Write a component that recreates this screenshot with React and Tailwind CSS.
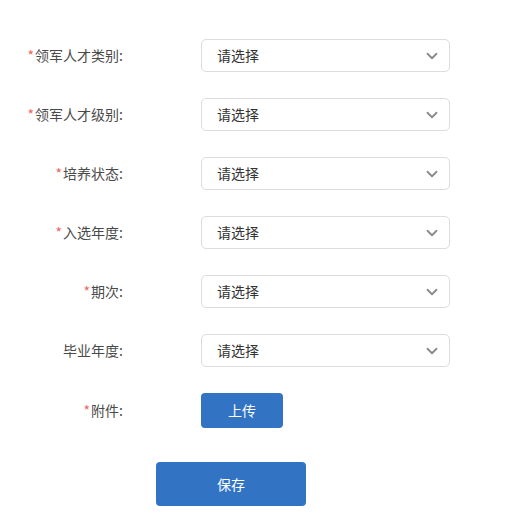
import { ChevronDown } from "lucide-react";

const fields = [
  { label: "领军人才类别", required: true },
  { label: "领军人才级别", required: true },
  { label: "培养状态", required: true },
  { label: "入选年度", required: true },
  { label: "期次", required: true },
  { label: "毕业年度", required: false },
];

function Label({ text, required }) {
  return (
    <div className="w-[123px] text-right text-[14px] text-[#4a4a4a]">
      {required && <span className="text-[#f06464] mr-[1px]">*</span>}
      {text}:
    </div>
  );
}

export default function App() {
  return (
    <div
      className="min-h-screen bg-white pt-[39px]"
      style={{ fontFamily: '"Microsoft YaHei", "Noto Sans CJK SC", sans-serif' }}
    >
      {fields.map((f) => (
        <div key={f.label} className="flex items-center h-[33px] mb-[26px]">
          <Label text={f.label} required={f.required} />
          <button className="ml-[78px] w-[249px] h-[33px] flex items-center justify-between pl-[15px] pr-[8px] border border-[#dcdcdc] rounded-[5px] bg-white text-[14px] text-[#333]">
            <span>请选择</span>
            <ChevronDown size={18} strokeWidth={2.4} className="text-[#8a8a8a]" />
          </button>
        </div>
      ))}

      <div className="flex items-center h-[35px]">
        <Label text="附件" required />
        <button className="ml-[78px] w-[82px] h-[35px] rounded-[4px] bg-[#3274c3] text-white text-[14px]">
          上传
        </button>
      </div>

      <div className="mt-[34px] pl-[156px]">
        <button className="w-[150px] h-[44px] rounded-[4px] bg-[#3274c3] text-white text-[14px]">
          保存
        </button>
      </div>
    </div>
  );
}
